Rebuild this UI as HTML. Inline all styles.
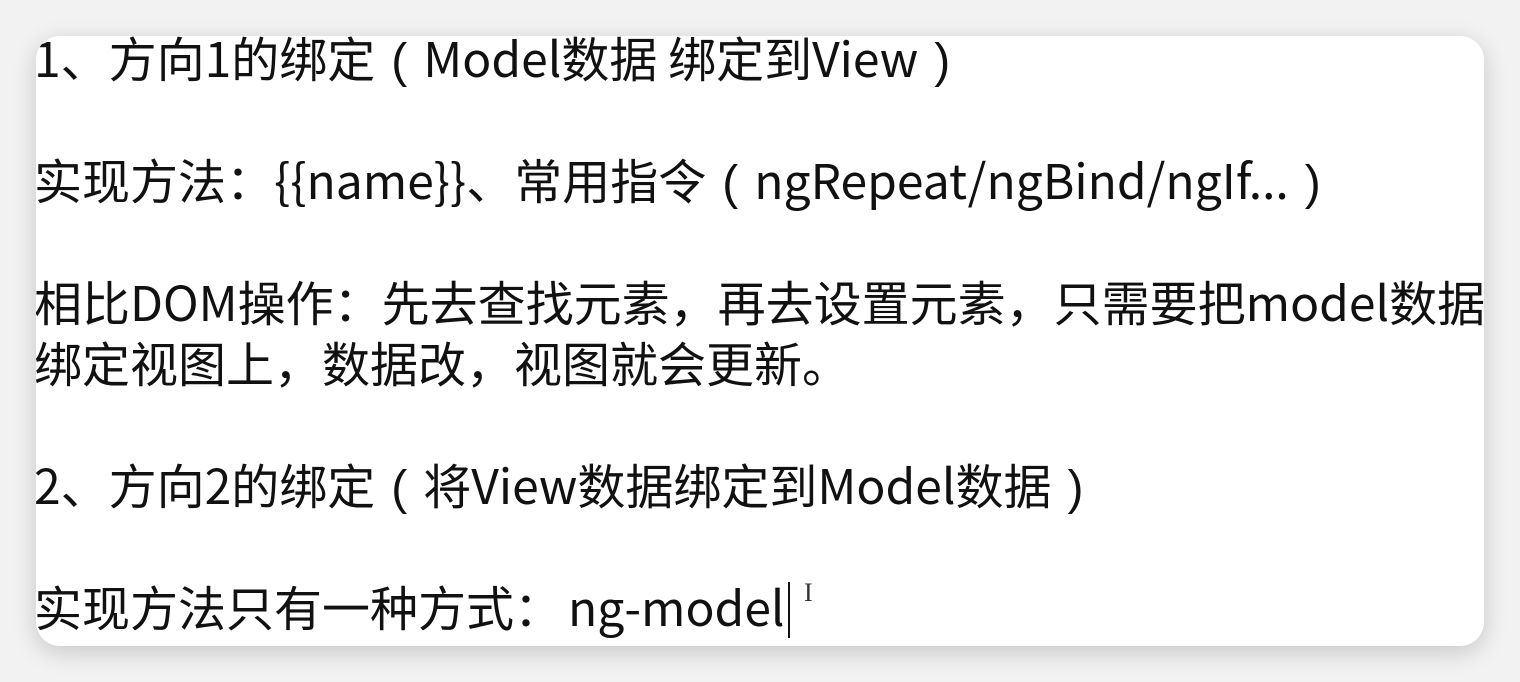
<!DOCTYPE html>
<html><head><meta charset="utf-8"><style>
html,body{margin:0;padding:0;width:1520px;height:682px;background:#f2f2f2;overflow:hidden}
.card{position:absolute;left:36px;top:36px;width:1448px;height:610px;background:#fff;border-radius:24px;overflow:hidden;box-shadow:0 6px 24px rgba(0,0,0,0.18)}
.t{position:absolute;left:-2px;top:-10px;font-family:"Noto Sans CJK SC","Liberation Sans",sans-serif;font-size:48px;line-height:61px;color:#111;white-space:nowrap}
.t div{height:61px}
.p{display:inline-block;width:48px;text-align:center;font-family:"Liberation Sans",sans-serif;font-weight:300}
.cur{display:inline-block;width:2px;height:56px;background:#111;vertical-align:-12px;margin-left:3px}
.ib{position:absolute;left:768px;top:542px;font-family:"Liberation Serif",serif;font-size:26px;color:#333}
</style></head><body>
<div class="card">
<div class="t">
<div>1、方向1的绑定<span class="p">(</span>Model数据 绑定到View<span class="p">)</span></div>
<div></div>
<div>实现方法：{{name}}、常用指令<span class="p">(</span>ngRepeat/ngBind/ngIf...<span class="p">)</span></div>
<div></div>
<div>相比DOM操作：先去查找元素，再去设置元素，只需要把model数据</div>
<div>绑定视图上，数据改，视图就会更新。</div>
<div></div>
<div>2、方向2的绑定<span class="p">(</span>将View数据绑定到Model数据<span class="p">)</span></div>
<div></div>
<div>实现方法只有一种方式：<span style="margin-left:6px">ng-model</span><span class="cur"></span></div>
</div>
<div class="ib">I</div>
</div>
</body></html>
